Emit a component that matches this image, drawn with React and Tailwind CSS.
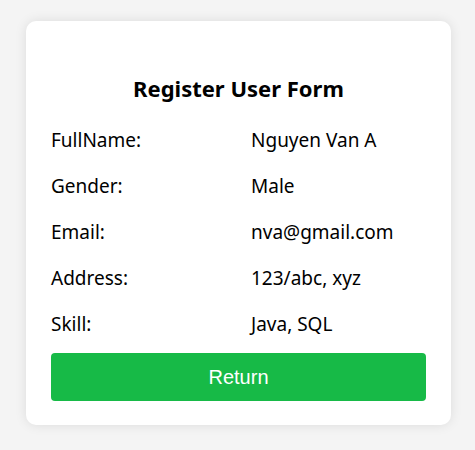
import React from "react";

const rows = [
  ["FullName:", "Nguyen Van A"],
  ["Gender:", "Male"],
  ["Email:", "nva@gmail.com"],
  ["Address:", "123/abc, xyz"],
  ["Skill:", "Java, SQL"],
];

export default function App() {
  return (
    <div className="min-h-[450px] bg-[#f4f4f4] pt-[21px] font-['Noto_Sans',sans-serif] text-black">
      <div className="ml-[26px] w-[425px] rounded-[10px] bg-white px-[25px] pt-[25px] pb-[24px] shadow-[0_0_12px_rgba(0,0,0,0.1)]">
        <h2 className="mt-[27px] h-[30px] text-center text-[22px] font-bold leading-[30px]">
          Register User Form
        </h2>
        <div className="mt-[14px]">
          {rows.map(([label, value]) => (
            <div key={label} className="flex h-[46px] items-center text-[19px] leading-[26px]">
              <span className="w-[200px]">{label}</span>
              <span>{value}</span>
            </div>
          ))}
        </div>
        <button
          type="button"
          className="mt-[6px] h-[48px] w-full rounded-[4px] bg-[#17ba47] font-['Liberation_Sans',Arial,sans-serif] text-[20px] text-white"
        >
          Return
        </button>
      </div>
    </div>
  );
}
